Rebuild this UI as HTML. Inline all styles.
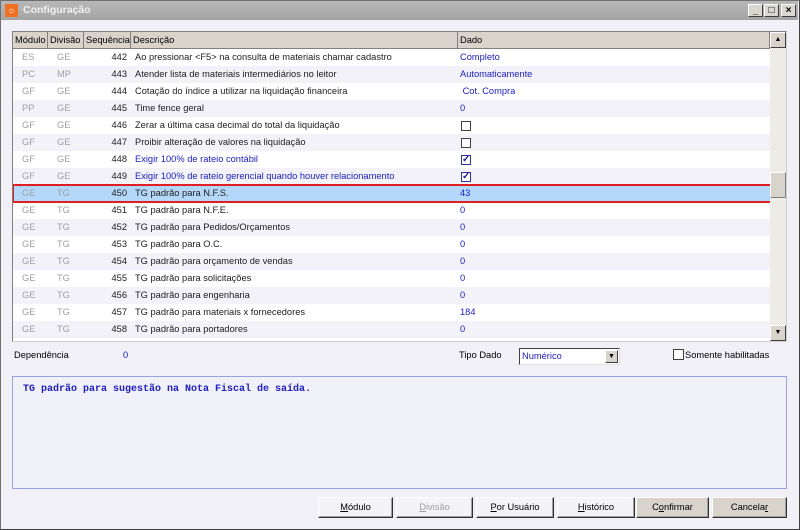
<!DOCTYPE html>
<html><head><meta charset="utf-8"><style>
*{box-sizing:border-box;margin:0;padding:0}
body{width:800px;height:530px;overflow:hidden;font-family:"Liberation Sans",sans-serif;font-size:9.3px;background:#f0f0f6;position:relative}
.abs{position:absolute}
#win{position:absolute;left:0;top:0;width:800px;height:530px;border:1px solid #707070;border-right-color:#404040;border-bottom-color:#404040}
#title{position:absolute;left:1px;top:1px;width:797px;height:19px;background:linear-gradient(#b8b8b8,#a4a4a4);color:#f0f0f0;font-weight:bold;font-size:10.5px;line-height:19px;padding-left:22px}
.tb{position:absolute;top:4px;width:15px;height:13px;background:#d8d8d0;border:1px solid;border-color:#fff #404040 #404040 #fff;font-size:10px;line-height:11px;text-align:center;color:#000;font-weight:bold}
#grid{position:absolute;left:12px;top:31px;width:775px;height:311px;border:1px solid #808080;border-right-color:#d0d0d0;border-bottom-color:#d0d0d0;background:#fff;overflow:hidden}
.hdr{position:absolute;top:0;height:17px;background:#d8d4cc;border-right:1px solid #808080;border-bottom:1px solid #808080;line-height:16px;padding-left:2px;color:#000;white-space:nowrap;overflow:hidden}
.row{position:absolute;left:0;width:757px;height:17px;line-height:17px}
.row span{position:absolute;top:0;white-space:nowrap}
.c1{left:9px;color:#a0a0a0}.c2{left:44px;color:#a0a0a0}.c3{left:70px;width:44px;text-align:right;color:#202020}.c4{left:122px;color:#202020}.c5{left:447px;color:#2020c0}
.cb{position:absolute;left:448px;top:4px;width:10px;height:10px;border:1px solid #404040;background:#fff}
.cb.on{border-color:#3030a0;color:#2020a0;font-size:10px;line-height:8px;text-align:center;font-weight:bold}
#sb{position:absolute;left:757px;top:0;width:16px;height:309px;background:repeating-conic-gradient(#e4e4dc 0 25%,#f4f4f0 0 50%) 0 0/2px 2px}
.sbb{position:absolute;left:0;width:16px;height:16px;background:#d8d4cc;border:1px solid;border-color:#fff #404040 #404040 #fff;font-size:7px;text-align:center;line-height:14px}
.btn{position:absolute;top:497px;height:21px;background:#f4f4f8;border:1px solid;border-color:#fff #303030 #303030 #fff;box-shadow:inset -1px -1px #a0a0a0;text-align:center;line-height:19px;color:#000}
.btn u{text-decoration:underline}
</style></head><body>
<div id="win"></div>
<div id="title">Configuração</div>
<div class="abs" style="left:5px;top:4px;width:13px;height:13px;background:#f07020;color:#fff;font-size:9px;line-height:13px;text-align:center;font-weight:bold">☼</div>
<div class="tb" style="left:748px">_</div>
<div class="tb" style="left:764px">□</div>
<div class="tb" style="left:781px">×</div>

<div id="grid">
<div class="hdr" style="left:0;width:35px">Módulo</div>
<div class="hdr" style="left:35px;width:36px">Divisão</div>
<div class="hdr" style="left:71px;width:47px">Sequência</div>
<div class="hdr" style="left:118px;width:327px">Descrição</div>
<div class="hdr" style="left:445px;width:312px">Dado</div>

<div class="row" style="top:17px;background:#fff"><span class="c1">ES</span><span class="c2">GE</span><span class="c3">442</span><span class="c4">Ao pressionar &lt;F5&gt; na consulta de materiais chamar cadastro</span><span class="c5">Completo</span></div>
<div class="row" style="top:34px;background:#f2f2f8"><span class="c1">PC</span><span class="c2">MP</span><span class="c3">443</span><span class="c4">Atender lista de materiais intermediários no leitor</span><span class="c5">Automaticamente</span></div>
<div class="row" style="top:51px;background:#fff"><span class="c1">GF</span><span class="c2">GE</span><span class="c3">444</span><span class="c4">Cotação do índice a utilizar na liquidação financeira</span><span class="c5">&nbsp;Cot. Compra</span></div>
<div class="row" style="top:68px;background:#f2f2f8"><span class="c1">PP</span><span class="c2">GE</span><span class="c3">445</span><span class="c4">Time fence geral</span><span class="c5">0</span></div>
<div class="row" style="top:85px;background:#fff"><span class="c1">GF</span><span class="c2">GE</span><span class="c3">446</span><span class="c4">Zerar a última casa decimal do total da liquidação</span><div class="cb"></div></div>
<div class="row" style="top:102px;background:#f2f2f8"><span class="c1">GF</span><span class="c2">GE</span><span class="c3">447</span><span class="c4">Proibir alteração de valores na liquidação</span><div class="cb"></div></div>
<div class="row" style="top:119px;background:#fff"><span class="c1">GF</span><span class="c2">GE</span><span class="c3">448</span><span class="c4" style="color:#2020c0">Exigir 100% de rateio contábil</span><div class="cb on">✓</div></div>
<div class="row" style="top:136px;background:#f2f2f8"><span class="c1">GF</span><span class="c2">GE</span><span class="c3">449</span><span class="c4" style="color:#2020c0">Exigir 100% de rateio gerencial quando houver relacionamento</span><div class="cb on">✓</div></div>
<div class="row" style="top:153px;background:#b4d8fa"><span class="c1">GE</span><span class="c2">TG</span><span class="c3">450</span><span class="c4">TG padrão para N.F.S.</span><span class="c5">43</span></div>
<div class="row" style="top:170px;background:#fff"><span class="c1">GE</span><span class="c2">TG</span><span class="c3">451</span><span class="c4">TG padrão para N.F.E.</span><span class="c5">0</span></div>
<div class="row" style="top:187px;background:#f2f2f8"><span class="c1">GE</span><span class="c2">TG</span><span class="c3">452</span><span class="c4">TG padrão para Pedidos/Orçamentos</span><span class="c5">0</span></div>
<div class="row" style="top:204px;background:#fff"><span class="c1">GE</span><span class="c2">TG</span><span class="c3">453</span><span class="c4">TG padrão para O.C.</span><span class="c5">0</span></div>
<div class="row" style="top:221px;background:#f2f2f8"><span class="c1">GE</span><span class="c2">TG</span><span class="c3">454</span><span class="c4">TG padrão para orçamento de vendas</span><span class="c5">0</span></div>
<div class="row" style="top:238px;background:#fff"><span class="c1">GE</span><span class="c2">TG</span><span class="c3">455</span><span class="c4">TG padrão para solicitações</span><span class="c5">0</span></div>
<div class="row" style="top:255px;background:#f2f2f8"><span class="c1">GE</span><span class="c2">TG</span><span class="c3">456</span><span class="c4">TG padrão para engenharia</span><span class="c5">0</span></div>
<div class="row" style="top:272px;background:#fff"><span class="c1">GE</span><span class="c2">TG</span><span class="c3">457</span><span class="c4">TG padrão para materiais x fornecedores</span><span class="c5">184</span></div>
<div class="row" style="top:289px;background:#f2f2f8"><span class="c1">GE</span><span class="c2">TG</span><span class="c3">458</span><span class="c4">TG padrão para portadores</span><span class="c5">0</span></div>
<div class="abs" style="left:-1px;top:152px;width:760px;height:19px;border:2px solid #e02020"></div>

<div id="sb">
<div class="sbb" style="top:0">▲</div>
<div class="sbb" style="top:140px;height:26px;border-color:#fff #808080 #808080 #fff"></div>
<div class="sbb" style="top:293px">▼</div>
</div>
</div>

<div class="abs" style="left:14px;top:350px">Dependência</div>
<div class="abs" style="left:123px;top:350px;color:#2020c0">0</div>
<div class="abs" style="left:459px;top:350px">Tipo Dado</div>
<div class="abs" style="left:519px;top:348px;width:101px;height:17px;background:#fff;border:1px solid;border-color:#404040 #e0e0e0 #e0e0e0 #404040;color:#2020c0;line-height:15px;padding-left:2px">Numérico
<div class="abs" style="right:1px;top:1px;width:13px;height:13px;background:#d8d4cc;border:1px solid;border-color:#fff #404040 #404040 #fff;color:#000;font-size:7px;text-align:center;line-height:11px">▼</div></div>
<div class="abs" style="left:673px;top:349px;width:11px;height:11px;border:1px solid #404040;background:#fff"></div>
<div class="abs" style="left:685px;top:350px">Somente habilitadas</div>

<div class="abs" style="left:12px;top:376px;width:775px;height:113px;background:#f0f0f8;border:1px solid #a0a0e0;padding:7px 10px;font-family:'Liberation Mono',monospace;font-size:10px;font-weight:bold;color:#2020c0">TG padrão para sugestão na Nota Fiscal de saída.</div>

<div class="btn" style="left:318px;width:75px"><u>M</u>ódulo</div>
<div class="btn" style="left:396px;width:77px;color:#a0a0a0"><u>D</u>ivisão</div>
<div class="btn" style="left:476px;width:78px"><u>P</u>or Usuário</div>
<div class="btn" style="left:557px;width:78px"><u>H</u>istórico</div>
<div class="btn" style="left:636px;width:73px;background:#d8d4cc">C<u>o</u>nfirmar</div>
<div class="btn" style="left:712px;width:75px;background:#d8d4cc">Cancela<u>r</u></div>
</body></html>
